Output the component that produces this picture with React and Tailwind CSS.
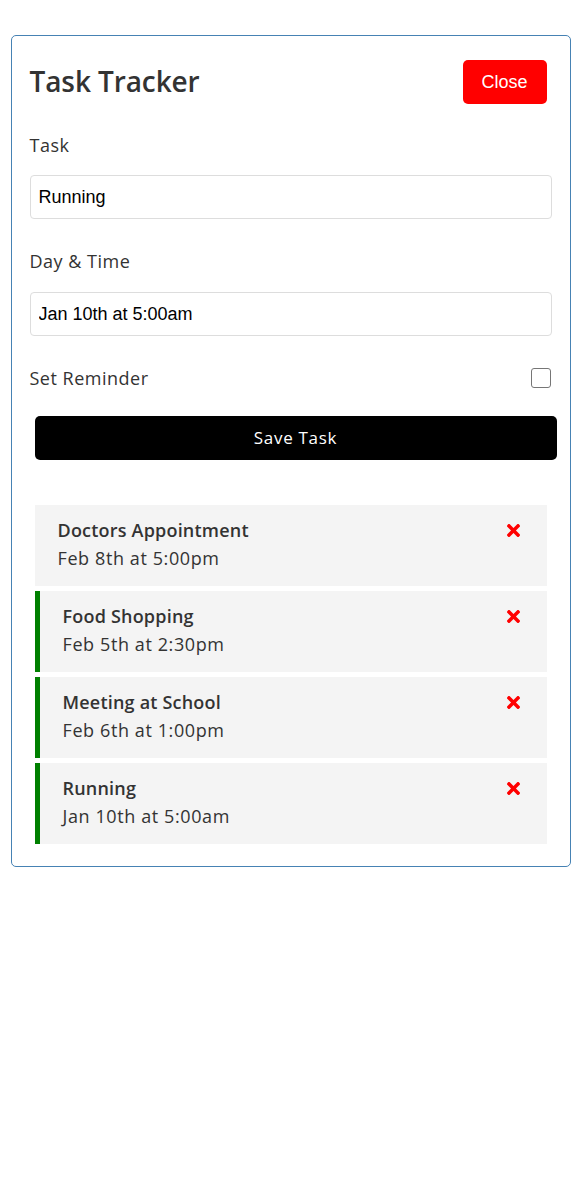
import React, { useState } from "react";
import { FaTimes } from "react-icons/fa";

const initialTasks = [
  { id: 1, text: "Doctors Appointment", day: "Feb 8th at 5:00pm", reminder: false },
  { id: 2, text: "Food Shopping", day: "Feb 5th at 2:30pm", reminder: true },
  { id: 3, text: "Meeting at School", day: "Feb 6th at 1:00pm", reminder: true },
  { id: 4, text: "Running", day: "Jan 10th at 5:00am", reminder: true },
];

export default function App() {
  const [tasks, setTasks] = useState(initialTasks);
  const [text, setText] = useState("Running");
  const [day, setDay] = useState("Jan 10th at 5:00am");
  const [reminder, setReminder] = useState(false);

  const onSubmit = (e) => {
    e.preventDefault();
    if (!text) return;
    setTasks([...tasks, { id: Date.now(), text, day, reminder }]);
  };

  const deleteTask = (id) => setTasks(tasks.filter((t) => t.id !== id));
  const toggleReminder = (id) =>
    setTasks(tasks.map((t) => (t.id === id ? { ...t, reminder: !t.reminder } : t)));

  return (
    <div className="bg-white min-h-[1182px] pt-[35px] font-['Open_Sans',sans-serif] text-[#333]">
      <div className="w-[560px] mx-auto border border-[#4682b4] rounded-[5px] px-[18px] pt-[18px] pb-[22px]">
        {/* Header */}
        <header className="flex justify-between items-center h-[54px]">
          <h1 className="text-[28px] font-semibold tracking-[-0.1px]">Task Tracker</h1>
          <button className="w-[84px] h-[44px] mr-[5px] mt-[2px] bg-[#ff0000] text-white rounded-[5px] text-[18px] font-['Liberation_Sans',Arial,sans-serif]">
            Close
          </button>
        </header>

        {/* Add task form */}
        <form onSubmit={onSubmit}>
          <label className="block mt-[24px] text-[18px] tracking-[0.5px] leading-[26px]">Task</label>
          <input
            type="text"
            value={text}
            onChange={(e) => setText(e.target.value)}
            className="block w-full h-[44px] mt-[17px] px-[8px] border border-[#ddd] rounded-[4px] text-[18px] text-black font-['Liberation_Sans',Arial,sans-serif] outline-none"
          />

          <label className="block mt-[29px] text-[18px] tracking-[0.5px] leading-[26px]">Day &amp; Time</label>
          <input
            type="text"
            value={day}
            onChange={(e) => setDay(e.target.value)}
            className="block w-full h-[44px] mt-[18px] px-[8px] border border-[#ddd] rounded-[4px] text-[18px] text-black font-['Liberation_Sans',Arial,sans-serif] outline-none"
          />

          <div className="flex justify-between items-center mt-[29px] h-[26px]">
            <label className="text-[18px] tracking-[0.5px] leading-[26px]">Set Reminder</label>
            <input
              type="checkbox"
              checked={reminder}
              onChange={(e) => setReminder(e.currentTarget.checked)}
              className="appearance-none w-[20px] h-[20px] mr-[1px] border border-[#767676] rounded-[3px] bg-white checked:bg-[#0075ff]"
            />
          </div>

          <button
            type="submit"
            className="block w-full h-[44px] mt-[25px] ml-[5px] bg-black text-white rounded-[5px] text-[17px] tracking-[0.7px]"
          >
            Save Task
          </button>
        </form>

        {/* Task list */}
        <div className="flex flex-col gap-[5px] mt-[45px] mx-[5px]">
          {tasks.map((task) => (
            <div
              key={task.id}
              onDoubleClick={() => toggleReminder(task.id)}
              className={`h-[81px] bg-[#f4f4f4] pl-[23px] pr-[24px] pt-[13px] cursor-pointer ${
                task.reminder ? "border-l-[5px] border-[#008000]" : ""
              }`}
            >
              <h3 className="flex justify-between items-center text-[18px] font-semibold tracking-[0.2px] leading-[24px]">
                {task.text}
                <FaTimes
                  size={19}
                  className="text-[#ff0000] cursor-pointer"
                  onClick={() => deleteTask(task.id)}
                />
              </h3>
              <p className="mt-[4px] text-[18px] tracking-[0.6px] leading-[24px]">{task.day}</p>
            </div>
          ))}
        </div>
      </div>
    </div>
  );
}
